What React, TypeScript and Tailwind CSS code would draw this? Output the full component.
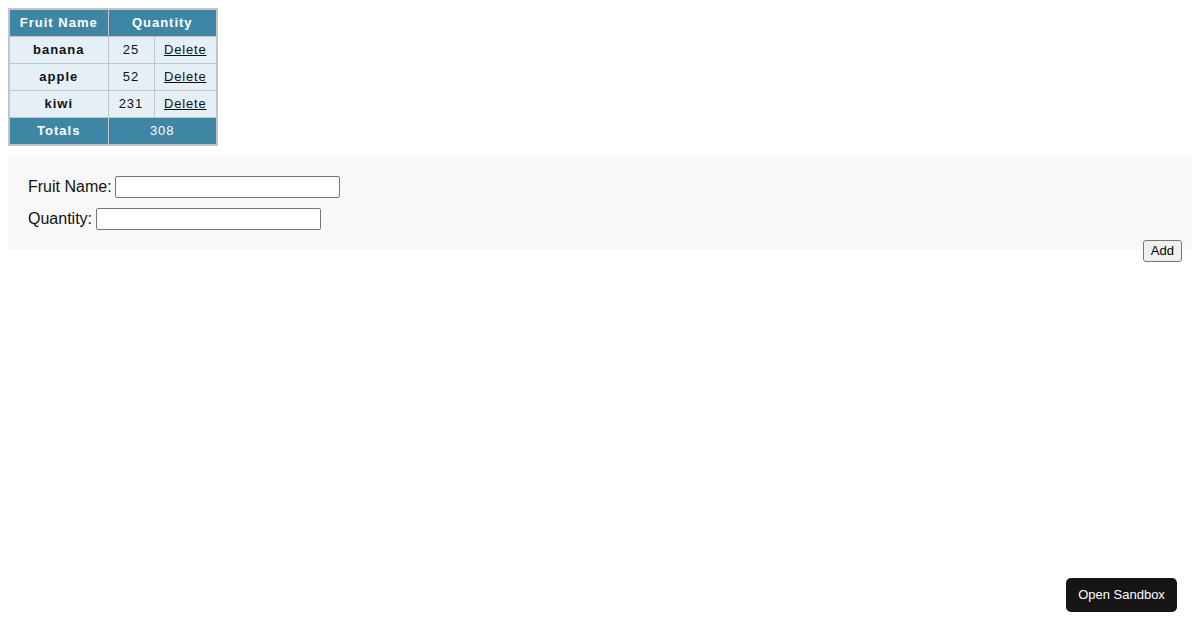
import { useState } from "react";

type Fruit = { name: string; qty: number };

export default function App() {
  const [fruits, setFruits] = useState<Fruit[]>([
    { name: "banana", qty: 25 },
    { name: "apple", qty: 52 },
    { name: "kiwi", qty: 231 },
  ]);
  const [name, setName] = useState("");
  const [qty, setQty] = useState("");

  const total = fruits.reduce((sum, f) => sum + f.qty, 0);

  // add a new fruit row
  const handleAdd = () => {
    if (!name) return;
    setFruits([...fruits, { name, qty: Number(qty) || 0 }]);
    setName("");
    setQty("");
  };

  return (
    <div className="min-h-screen bg-white p-2 font-['Liberation_Sans',Arial,sans-serif] text-[#111]">
      {/* fruit table */}
      <table className="border-collapse border-2 border-[#c4c4c4] text-[13px] tracking-[1px]">
        <thead>
          <tr className="h-[27px] bg-[#3d86a6] text-white">
            <th className="w-[99px] border border-[#c4c4c4] px-2 font-bold">Fruit Name</th>
            <th colSpan={2} className="border border-[#c4c4c4] px-2 font-bold">
              Quantity
            </th>
          </tr>
        </thead>
        <tbody>
          {fruits.map((f, i) => (
            <tr key={i} className="h-[27px] bg-[#e4f0f5]">
              <td className="border border-[#c4c4c4] px-2 text-center font-bold">{f.name}</td>
              <td className="w-[46px] border border-[#c4c4c4] px-2 text-center">{f.qty}</td>
              <td className="w-[63px] border border-[#c4c4c4] px-2 text-center">
                <a
                  href="#"
                  className="underline tracking-[0.8px]"
                  onClick={(e) => {
                    e.preventDefault();
                    setFruits(fruits.filter((_, j) => j !== i));
                  }}
                >
                  Delete
                </a>
              </td>
            </tr>
          ))}
        </tbody>
        <tfoot>
          <tr className="h-[28px] bg-[#3d86a6] text-white">
            <td className="border border-[#c4c4c4] px-2 text-center font-bold">Totals</td>
            <td colSpan={2} className="border border-[#c4c4c4] px-2 text-center">
              {total}
            </td>
          </tr>
        </tfoot>
      </table>

      {/* add form */}
      <div className="mt-[10px] flex flex-col gap-[10px] bg-[#f8f8f8] p-5 text-base leading-[22px]">
        <label className="flex h-[22px] items-center gap-[3px]">
          Fruit Name:
          <input
            value={name}
            onChange={(e) => setName(e.target.value)}
            className="h-[22px] w-[225px] rounded-[2px] border border-[#767676] bg-white px-1 text-[13px]"
          />
        </label>
        <label className="flex h-[22px] items-center gap-1">
          Quantity:
          <input
            value={qty}
            onChange={(e) => setQty(e.target.value)}
            className="h-[22px] w-[225px] rounded-[2px] border border-[#767676] bg-white px-1 text-[13px]"
          />
        </label>
      </div>
      <div className="-mt-[10px] flex justify-end pr-[10px]">
        <button
          onClick={handleAdd}
          className="h-[22px] rounded-[3px] border border-[#767676] bg-[#efefef] px-[7px] text-[13px] text-black"
        >
          Add
        </button>
      </div>

      {/* sandbox button */}
      <button className="fixed right-[23px] bottom-[18px] h-[34px] w-[111px] rounded-[5px] bg-[#151515] text-[13px] text-white">
        Open Sandbox
      </button>
    </div>
  );
}
